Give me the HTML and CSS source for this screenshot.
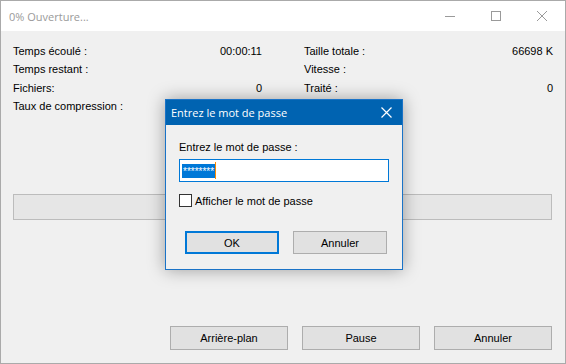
FILE: index.html
```html
<!DOCTYPE html>
<html lang="fr">
<head>
    <meta charset="UTF-8">
    <title>0% Ouverture...</title>
    <link rel="stylesheet" href="styles.css">
</head>
<body>
    <div class="window">
        <div class="titlebar">
            <span class="caption">0% Ouverture...</span>
            <div class="caption-buttons">
                <span class="cap-btn">
                    <svg width="10" height="10" viewBox="0 0 10 10"><path d="M0 5.5h10" stroke="#9a9a9a" stroke-width="1"/></svg>
                </span>
                <span class="cap-btn">
                    <svg width="10" height="10" viewBox="0 0 10 10"><rect x="0.5" y="0.5" width="9" height="9" fill="none" stroke="#9a9a9a" stroke-width="1"/></svg>
                </span>
                <span class="cap-btn">
                    <svg width="10" height="10" viewBox="0 0 10 10"><path d="M0 0L10 10M10 0L0 10" stroke="#9a9a9a" stroke-width="1"/></svg>
                </span>
            </div>
        </div>

        <div class="content">
            <div class="stats">
                <div class="col">
                    <div class="row"><span>Temps écoulé :</span><span>00:00:11</span></div>
                    <div class="row"><span>Temps restant :</span><span></span></div>
                    <div class="row"><span>Fichiers:</span><span>0</span></div>
                    <div class="row"><span>Taux de compression :</span><span></span></div>
                </div>
                <div class="col">
                    <div class="row"><span>Taille totale :</span><span>66698 K</span></div>
                    <div class="row"><span>Vitesse :</span><span></span></div>
                    <div class="row"><span>Traité :</span><span>0</span></div>
                </div>
            </div>

            <div class="progress"></div>

            <div class="actions">
                <button class="btn">Arrière-plan</button>
                <button class="btn">Pause</button>
                <button class="btn">Annuler</button>
            </div>
        </div>

        <!-- password prompt over the progress window -->
        <div class="dialog">
            <div class="dialog-title">
                <span>Entrez le mot de passe</span>
                <svg width="11" height="11" viewBox="0 0 11 11"><path d="M0.5 0.5L10.5 10.5M10.5 0.5L0.5 10.5" stroke="#fff" stroke-width="1.2"/></svg>
            </div>
            <div class="dialog-body">
                <label class="field-label">Entrez le mot de passe :</label>
                <div class="input"><span class="selected">********</span><span class="caret"></span></div>
                <div class="check">
                    <span class="box"></span>
                    <span>Afficher le mot de passe</span>
                </div>
                <div class="dialog-actions">
                    <button class="btn btn-small default">OK</button>
                    <button class="btn btn-small">Annuler</button>
                </div>
            </div>
        </div>
    </div>
</body>
</html>
```

FILE: styles.css
```css
body {
    margin: 0;
    font-family: 'Liberation Sans', Arial, sans-serif;
    font-size: 11px;
    color: #000;
}

.window {
    position: relative;
    width: 566px;
    height: 364px;
    box-sizing: border-box;
    border: 1px solid #aaaaaa;
    display: flex;
    flex-direction: column;
    background: #f0f0f0;
}

.titlebar {
    height: 30px;
    background: #fff;
    display: flex;
    align-items: center;
    justify-content: space-between;
}

.caption {
    font-family: 'Open Sans', 'Noto Sans', sans-serif;
    font-size: 11px;
    color: #9a9a9a;
    padding-left: 8px;
    padding-top: 1px;
}

.caption-buttons {
    display: flex;
    height: 100%;
}

.cap-btn {
    width: 46px;
    display: flex;
    align-items: center;
    justify-content: center;
}

.cap-btn svg {
    display: block;
}

.content {
    flex: 1;
    display: flex;
    flex-direction: column;
    padding: 11px 12px 13px 12px;
}

.stats {
    display: grid;
    grid-template-columns: 249px 249px;
    column-gap: 42px;
}

.row {
    display: flex;
    justify-content: space-between;
    height: 18.3px;
    line-height: 18px;
}

.progress {
    margin-top: 79px;
    height: 24px;
    border: 1px solid #bcbcbc;
    background: #e6e6e6;
    margin-right: 1px;
}

.actions {
    margin-top: auto;
    display: flex;
    justify-content: flex-end;
    gap: 14px;
    padding-right: 1px;
}

.btn {
    width: 118px;
    height: 24px;
    padding: 0;
    border: 1px solid #adadad;
    background: #e1e1e1;
    font-family: 'Liberation Sans', Arial, sans-serif;
    font-size: 11px;
    color: #000;
}

/* dialog */

.dialog {
    position: absolute;
    left: 164px;
    top: 98px;
    width: 236px;
    height: 169px;
    border: 1px solid #1a73c7;
    background: #f0f0f0;
    box-shadow: 0 0 16px rgba(0, 0, 0, 0.35);
    display: flex;
    flex-direction: column;
}

.dialog-title {
    height: 25px;
    background: #0063b1;
    color: #fff;
    font-family: 'Open Sans', 'Noto Sans', sans-serif;
    font-size: 11px;
    display: flex;
    align-items: center;
    justify-content: space-between;
    padding: 0 10px 0 5px;
}

.dialog-title svg {
    display: block;
}

.dialog-body {
    padding: 16px 13px 0 13px;
}

.field-label {
    display: block;
    line-height: 13px;
}

.input {
    margin-top: 5px;
    height: 21px;
    border: 1px solid #0078d7;
    background: #fff;
    display: flex;
    align-items: center;
    padding-left: 2px;
}

.selected {
    background: #0078d7;
    color: #fff;
    height: 14px;
    line-height: 16px;
    font-size: 10px;
    padding: 0 1px;
    letter-spacing: 0;
}

.caret {
    width: 1px;
    height: 17px;
    background: #ff8c00;
}

.check {
    margin-top: 12px;
    display: flex;
    align-items: center;
    gap: 3px;
}

.box {
    width: 11px;
    height: 11px;
    border: 1px solid #333;
    background: #fff;
}

.dialog-actions {
    margin-top: 24px;
    display: flex;
    gap: 14px;
    padding-left: 6px;
}

.btn-small {
    width: 94px;
    height: 23px;
}

.default {
    border: 2px solid #0078d7;
}
```
